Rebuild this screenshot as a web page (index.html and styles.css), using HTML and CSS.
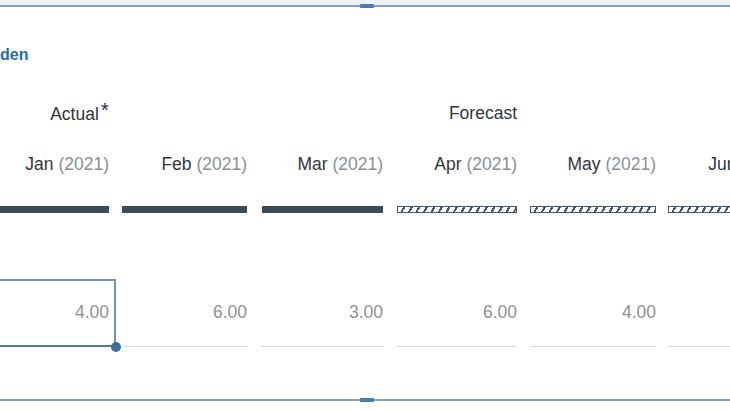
FILE: index.html
```html
<!DOCTYPE html>
<html>
<head>
<meta charset="utf-8">
<link rel="stylesheet" href="styles.css">
</head>
<body>
<div class="strip"></div>
<div class="frame">
  <span class="handle handle-top"></span>
  <span class="handle handle-bottom"></span>
  <div class="link">den</div>
  <div class="row groups">
    <div class="cell">Actual<span class="star">*</span></div>
    <div class="cell"></div>
    <div class="cell"></div>
    <div class="cell">Forecast</div>
    <div class="cell"></div>
    <div class="cell"></div>
  </div>
  <div class="row months">
    <div class="cell">Jan <span class="yr">(2021)</span></div>
    <div class="cell">Feb <span class="yr">(2021)</span></div>
    <div class="cell">Mar <span class="yr">(2021)</span></div>
    <div class="cell">Apr <span class="yr">(2021)</span></div>
    <div class="cell">May <span class="yr">(2021)</span></div>
    <div class="cell">Jun <span class="yr">(2021)</span></div>
  </div>
  <div class="row bars">
    <div class="cell bar"></div>
    <div class="cell bar"></div>
    <div class="cell bar"></div>
    <div class="cell bar hatch"></div>
    <div class="cell bar hatch"></div>
    <div class="cell bar hatch"></div>
  </div>
  <div class="row values">
    <div class="cell val selected">4.00<span class="dot"></span></div>
    <div class="cell val">6.00</div>
    <div class="cell val">3.00</div>
    <div class="cell val">6.00</div>
    <div class="cell val">4.00</div>
    <div class="cell val"></div>
  </div>
</div>
</body>
</html>
```
FILE: styles.css
```css
html, body {
  margin: 0;
  padding: 0;
  width: 730px;
  height: 410px;
  overflow: hidden;
  background: #ffffff;
  font-family: "Liberation Sans", Arial, sans-serif;
  color: #32363a;
}
.strip {
  height: 5px;
  background: #eef1f4;
}
.frame {
  position: relative;
  box-sizing: border-box;
  height: 396px;
  border-top: 2px solid #7f9fc6;
  border-bottom: 2px solid #7f9fc6;
}
.handle {
  position: absolute;
  left: 360px;
  width: 14px;
  height: 4px;
  background: #4a7bb3;
  border-radius: 1px;
  z-index: 2;
}
.handle-top { top: -3px; }
.handle-bottom { bottom: -3px; }
.link {
  padding-top: 38px;
  font-size: 16px;
  line-height: 20px;
  font-weight: bold;
  color: #1f6bb5;
}
.row {
  display: flex;
  margin-left: -15px;
}
.cell {
  flex: none;
  width: 124px;
  text-align: right;
  font-size: 17.5px;
  line-height: 22px;
  white-space: nowrap;
}
.row > .cell:nth-child(2) { margin-left: 13px; width: 125px; }
.row > .cell:nth-child(3) { margin-left: 15px; width: 121px; }
.row > .cell:nth-child(4) { margin-left: 14px; width: 120px; }
.row > .cell:nth-child(5) { margin-left: 13px; width: 126px; }
.row > .cell:nth-child(6) { margin-left: 12px; width: 124px; }
.groups { margin-top: 37px; }
.star {
  font-size: 21px;
  position: relative;
  top: -3px;
  margin-left: 2px;
}
.months { margin-top: 28px; }
.yr { color: #8a9096; }
.bars { margin-top: 31px; }
.bar {
  height: 7px;
  background: #3f4a57;
}
.bar.hatch {
  box-sizing: border-box;
  border: 1px solid #4a5664;
  background: repeating-linear-gradient(120deg, #ffffff 0 4.5px, #4a5664 4.5px 6.5px);
}
.values { margin-top: 66px; }
.val {
  position: relative;
  box-sizing: border-box;
  height: 68px;
  line-height: 66px;
  color: #8d9195;
  border-bottom: 1px solid #d6d6d6;
}
.val.selected {
  border-bottom-color: transparent;
}
.val.selected::after {
  content: "";
  position: absolute;
  left: 0;
  right: -7px;
  top: 0;
  bottom: -1px;
  border: 2px solid #6d90b9;
  border-left: none;
  border-bottom-color: #4f78a6;
}
.dot {
  position: absolute;
  right: -12px;
  bottom: -6px;
  width: 10px;
  height: 10px;
  border-radius: 50%;
  background: #3e6b9b;
  z-index: 1;
}
```
